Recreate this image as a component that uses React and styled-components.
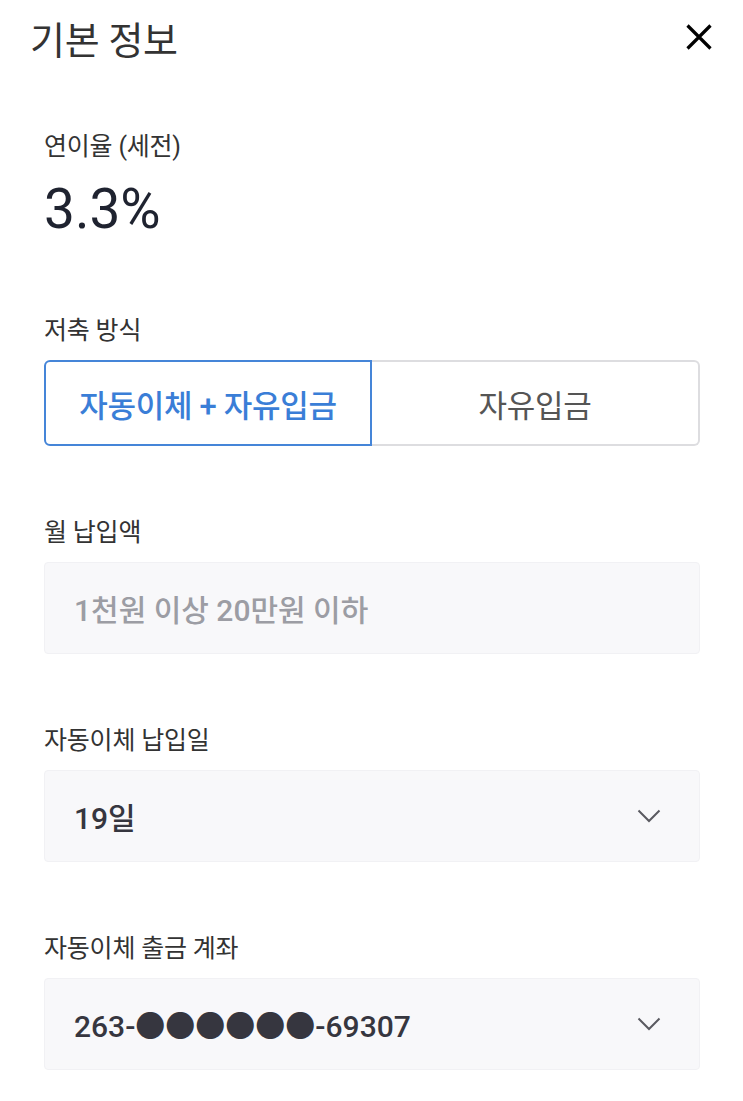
import React from 'react'
import styled, { createGlobalStyle } from 'styled-components'

const GlobalStyle = createGlobalStyle`
  body {
    margin: 0;
    background: #fff;
    font-family: Roboto, "Noto Sans CJK KR", sans-serif;
    color: #333;
  }
`

const Page = styled.div`
  width: 743px;
  padding: 0 43px 0 44px;
  box-sizing: border-box;
`

const Header = styled.header`
  height: 74px;
  display: flex;
  align-items: center;
  justify-content: space-between;
  margin-left: -14px;
`

const Title = styled.h1`
  margin: 0;
  font-size: 38px;
  font-weight: 400;
  color: #333;
  letter-spacing: -0.3px;
`

const CloseButton = styled.button`
  border: 0;
  background: none;
  padding: 0;
  width: 26px;
  height: 26px;
  display: flex;
  margin-right: -12px;
`

const Field = styled.section`
  margin-top: ${p => p.gap}px;
`

const Label = styled.div`
  font-size: 25px;
  line-height: 28px;
  color: #333;
  margin-bottom: ${p => p.mb || 15}px;
  letter-spacing: -0.2px;
`

const Rate = styled.div`
  font-size: 55px;
  line-height: 64px;
  color: #1f2330;
`

const Toggle = styled.div`
  display: grid;
  grid-template-columns: 1fr 1fr;
  height: 86px;
`

const ToggleOption = styled.div`
  display: flex;
  align-items: center;
  justify-content: center;
  font-size: 31px;
  letter-spacing: -0.3px;
  border: 2px solid ${p => (p.active ? '#4585d8' : '#dddde0')};
  border-left-width: ${p => (p.active ? 2 : 0)}px;
  border-radius: ${p => (p.active ? '6px 0 0 6px' : '0 6px 6px 0')};
  color: ${p => (p.active ? '#3a7ed7' : '#555')};
  font-weight: ${p => (p.active ? 500 : 400)};
`

const Box = styled.div`
  height: 92px;
  box-sizing: border-box;
  display: flex;
  align-items: center;
  justify-content: space-between;
  padding: 0 38px 0 29px;
  background: #f8f8fa;
  border: 1px solid #f1f1f4;
  border-radius: 4px;
  font-size: 30px;
  font-weight: 500;
  color: ${p => (p.placeholder ? '#9c9da4' : '#36363f')};
`

const Chevron = () => (
  <svg width='24' height='14' viewBox='0 0 24 14'>
    <polyline points='1.5,1.5 12,12 22.5,1.5' fill='none' stroke='#5a5a60' strokeWidth='2' />
  </svg>
)

export default function App () {
  return (
    <Page>
      <GlobalStyle />
      <Header>
        <Title>기본 정보</Title>
        <CloseButton>
          <svg width='26' height='26' viewBox='0 0 26 26'>
            <path d='M1.5 1.5 L24.5 24.5 M24.5 1.5 L1.5 24.5' stroke='#000' strokeWidth='3.2' />
          </svg>
        </CloseButton>
      </Header>

      <Field gap={59}>
        <Label mb={16}>연이율 (세전)</Label>
        <Rate>3.3%</Rate>
      </Field>

      <Field gap={76}>
        <Label>저축 방식</Label>
        <Toggle>
          <ToggleOption active>자동이체 + 자유입금</ToggleOption>
          <ToggleOption>자유입금</ToggleOption>
        </Toggle>
      </Field>

      <Field gap={73}>
        <Label>월 납입액</Label>
        <Box placeholder>1천원 이상 20만원 이하</Box>
      </Field>

      <Field gap={73}>
        <Label>자동이체 납입일</Label>
        <Box>
          19일
          <Chevron />
        </Box>
      </Field>

      <Field gap={73}>
        <Label>자동이체 출금 계좌</Label>
        <Box>
          263-●●●●●●-69307
          <Chevron />
        </Box>
      </Field>
    </Page>
  )
}
